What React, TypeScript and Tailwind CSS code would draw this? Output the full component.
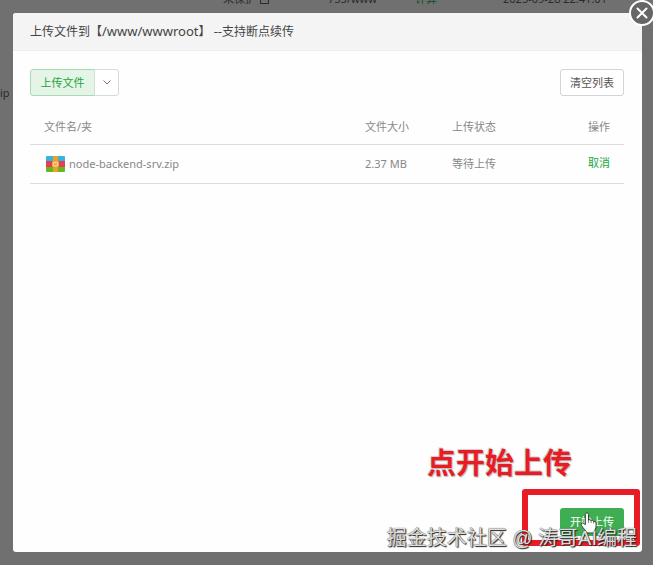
import { useState } from "react";

type UploadItem = {
  name: string;
  size: string;
  status: string;
};

const initialItems: UploadItem[] = [
  { name: "node-backend-srv.zip", size: "2.37 MB", status: "等待上传" },
];

function ZipIcon() {
  return (
    <svg viewBox="0 0 19 16" className="h-4 w-[19px] shrink-0" aria-hidden="true">
      <rect width="19" height="6" rx="1" fill="#35b4dc" />
      <rect y="10" width="19" height="6" rx="1" fill="#62b81f" />
      <rect y="5" width="19" height="6" fill="#e93d55" />
      <rect x="7" width="5" height="16" fill="#e9a02c" />
      <rect x="6" y="5" width="7" height="6" rx="1" fill="#f0a63a" />
      <rect x="7.5" y="6.5" width="4" height="3.5" rx="1" fill="none" stroke="#fbe3b4" strokeWidth="1" />
    </svg>
  );
}

function HandCursor() {
  return (
    <svg viewBox="0 0 16 21" className="absolute top-1 left-5 h-[22px] w-[17px]" aria-hidden="true">
      <path
        d="M5 12V2.400C5 .4 8 .4 8 2.400V8c.3-1 2.400-.9 2.500.5.5-.9 2.300-.6 2.400.8.7-.7 2.300-.3 2.300 1.200v3.200c0 2.300-1.500 3.300-1.500 6.300H6c0-2.200-2.800-4-4.700-7.200C.4 11 2 10 3.300 11z"
        fill="#fff"
        stroke="#222"
        strokeWidth="0.8"
        strokeLinejoin="round"
      />
      <path d="M8 8v2.500M10.500 8.500v2M12.900 9.500v1.500" stroke="#444" strokeWidth="0.6" fill="none" />
    </svg>
  );
}

export default function App() {
  const [items, setItems] = useState(initialItems);

  return (
    <div className="relative grid min-h-screen overflow-hidden bg-[#707070] font-['Noto_Sans','Noto_Sans_CJK_SC',sans-serif] text-[11px] text-[#888]">
      {/* file list behind the dialog */}
      <div className="-mt-[9px] leading-4 text-[#2b2b2b] [grid-area:1/1]" aria-hidden="true">
        <div className="grid grid-cols-[105px_87px_88px_1fr] pl-[223px]">
          <span className="flex items-center gap-1">
            未保护
            <svg viewBox="0 0 9 10" className="h-[10px] w-[9px]" fill="none" stroke="#2b2b2b">
              <rect x="0.5" y="4.5" width="8" height="5" />
              <path d="M2.5 4.5v-2a2 2 0 0 1 4 0v2" />
            </svg>
          </span>
          <span>755/www</span>
          <span className="text-[#12502a]">计算</span>
          <span>2025-09-28 22:41:01</span>
        </div>
        <div className="pt-[78px]">ip</div>
      </div>

      <div
        role="dialog"
        aria-labelledby="upload-title"
        className="relative mt-[13px] mr-[11px] mb-[13px] ml-[13px] flex flex-col rounded-[3px] bg-[#fefefe] [grid-area:1/1]"
      >
        <header className="rounded-t-[3px] border-b border-[#eee] bg-[#f4f4f4] px-[17px]">
          <h1 id="upload-title" className="text-[12px] leading-[37px] text-[#444]">
            上传文件到【<span className="text-[13px]">/www/wwwroot</span>】{" "}
            <span className="text-[13px]">--</span>支持断点续传
          </h1>
        </header>
        <button
          type="button"
          aria-label="关闭"
          className="absolute -top-[13px] -right-[13px] flex size-[26px] items-center justify-center rounded-full border-2 border-white bg-[#666]"
        >
          <svg viewBox="0 0 12 12" className="size-3" stroke="#fff" strokeWidth="2" strokeLinecap="round">
            <path d="M1.5 1.5l9 9M10.5 1.5l-9 9" />
          </svg>
        </button>

        <main className="grow pt-[18px] pr-[18px] pl-[17px]">
          <div className="flex justify-between">
            <div className="flex h-[27px]">
              <button
                type="button"
                className="w-[65px] rounded-l-[3px] border border-[#a9d9b4] bg-[#e4f4e7] pt-px text-[#20a53a]"
              >
                上传文件
              </button>
              <button
                type="button"
                aria-label="更多上传方式"
                className="-ml-px flex w-[25px] items-center justify-center rounded-r-[3px] border border-[#cfe0d3] bg-white"
              >
                <svg viewBox="0 0 8 5" className="h-[5px] w-2" fill="none" stroke="#777">
                  <path d="M.5.5L4 4 7.5.5" />
                </svg>
              </button>
            </div>
            <button
              type="button"
              onClick={() => setItems([])}
              className="h-[27px] w-16 rounded-[3px] border border-[#d4d4d4] bg-white pt-px text-[#555]"
            >
              清空列表
            </button>
          </div>

          <table className="mt-[13px] w-full table-fixed text-left">
            <colgroup>
              <col />
              <col className="w-[87px]" />
              <col className="w-[112px]" />
              <col className="w-[60px]" />
            </colgroup>
            <thead>
              <tr className="h-[35px] border-b border-[#ddd]">
                <th className="pt-[2px] pl-[14px] font-normal">文件名/夹</th>
                <th className="pt-[2px] font-normal">文件大小</th>
                <th className="pt-[2px] font-normal">上传状态</th>
                <th className="pt-[2px] pr-[14px] text-right font-normal">操作</th>
              </tr>
            </thead>
            <tbody>
              {items.map((item) => (
                <tr key={item.name} className="h-[39px] border-b border-[#ddd]">
                  <td className="pl-4">
                    <span className="flex items-center gap-1">
                      <ZipIcon />
                      <span className="pt-px">{item.name}</span>
                    </span>
                  </td>
                  <td className="pt-[2px]">{item.size}</td>
                  <td className="pt-[2px]">{item.status}</td>
                  <td className="pr-[14px] text-right">
                    <button
                      type="button"
                      onClick={() => setItems(items.filter((i) => i !== item))}
                      className="text-[#20a53a]"
                    >
                      取消
                    </button>
                  </td>
                </tr>
              ))}
            </tbody>
          </table>
        </main>

        <footer className="flex justify-end px-[18px] pb-4">
          <div className="relative">
            <button type="button" className="h-7 w-16 rounded-[3px] bg-[#3fae52] text-white">
              开始上传
            </button>
            <HandCursor />
          </div>
        </footer>
      </div>

      {/* annotations laid over the dialog */}
      <p className="absolute right-[81px] bottom-[82px] text-[29px] leading-10 font-bold text-[#e81c24] [text-shadow:1px_1px_1px_#bbb,-1px_-1px_1px_#ccc]">
        点开始上传
      </p>
      <div className="absolute right-[13px] bottom-[19px] h-[57px] w-[118px] rounded-[3px] border-[6px] border-[#e81c24]" />
      <p className="absolute right-4 bottom-3 font-['Liberation_Sans','Noto_Sans_CJK_SC',sans-serif] text-[20px] leading-[30px] whitespace-nowrap text-[#ddd] [text-shadow:1px_1px_1px_#222,0_0_1px_#333]">
        掘金技术社区 @ 涛哥AI编程
      </p>
    </div>
  );
}
